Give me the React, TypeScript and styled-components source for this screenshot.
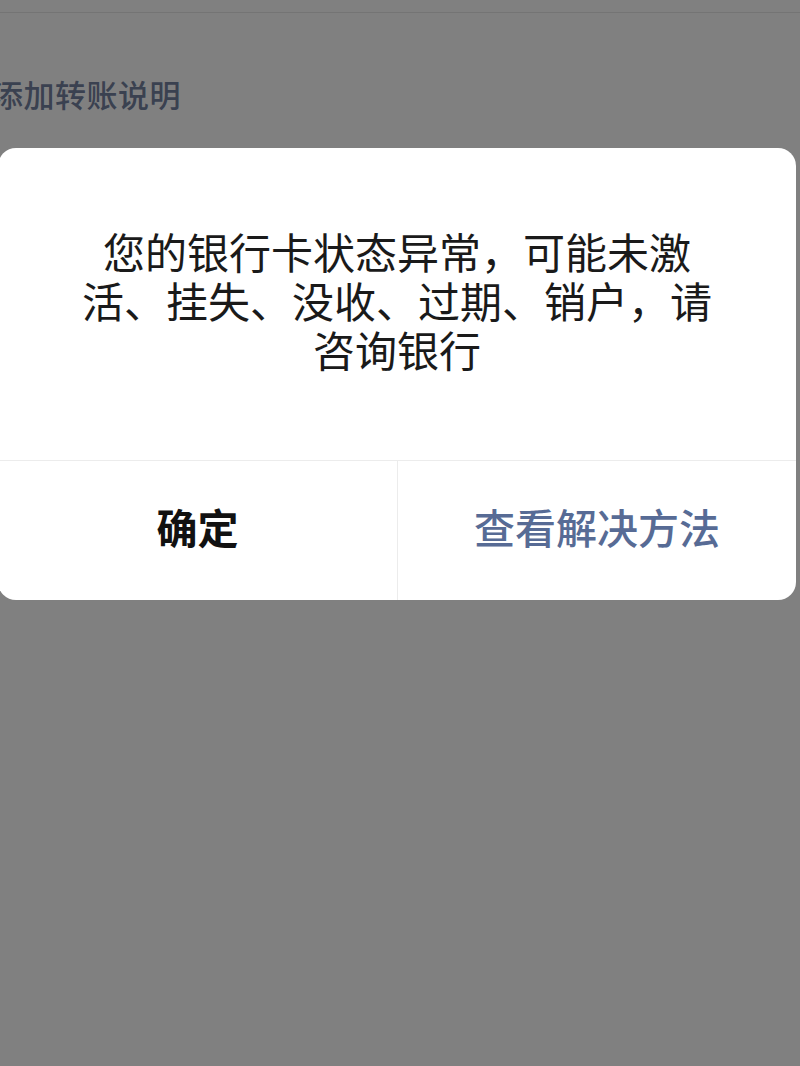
import React from "react";
import styled, { createGlobalStyle } from "styled-components";

const Global = createGlobalStyle`
  html, body {
    margin: 0;
    padding: 0;
    background: #808080;
    font-family: "Noto Sans CJK SC", "Noto Sans", sans-serif;
    overflow: hidden;
  }
  #root { min-height: 1066px; }
`;

const Page = styled.div`
  width: 800px;
  height: 1066px;
  background: #808080;
  position: relative;
  overflow: hidden;
`;

const NavBar = styled.div`
  height: 12px;
  border-bottom: 1.5px solid #747474;
`;

const Remark = styled.div`
  margin: 59px 0 0 -8px;
  font-size: 31px;
  line-height: 44px;
  font-weight: 500;
  color: #3a4150;
  letter-spacing: 0.5px;
`;

const Overlay = styled.div`
  position: absolute;
  inset: 0;
  display: flex;
  justify-content: flex-start;
  align-items: flex-start;
  padding-top: 148px;
`;

const Dialog = styled.div`
  margin-left: -2px;
  width: 798px;
  background: #ffffff;
  border-radius: 18px;
  overflow: hidden;
  display: flex;
  flex-direction: column;
`;

const Body = styled.div`
  height: 312px;
  padding-bottom: 9px;
  display: flex;
  align-items: center;
  justify-content: center;
  box-sizing: border-box;
`;

const Message = styled.p`
  margin: 0;
  max-width: 650px;
  text-align: center;
  font-size: 42px;
  line-height: 49px;
  color: #1a1a1a;
  font-weight: 400;
`;

const Actions = styled.div`
  display: grid;
  grid-template-columns: 399px 1fr;
  height: 139px;
  border-top: 1.5px solid #ececec;
`;

const Action = styled.button<{ $primary?: boolean }>`
  border: none;
  background: transparent;
  margin: 0;
  padding: 0 0 9px 0;
  display: flex;
  align-items: center;
  justify-content: center;
  font-family: inherit;
  font-size: 41px;
  font-weight: ${(p) => (p.$primary ? 500 : 700)};
  color: ${(p) => (p.$primary ? "#576b95" : "#111111")};
  & + & {
    border-left: 1.5px solid #ececec;
  }
`;

export default function App() {
  return (
    <Page>
      <Global />
      <NavBar />
      <Remark>添加转账说明</Remark>
      <Overlay>
        <Dialog>
          <Body>
            <Message>
              您的银行卡状态异常，可能未激活、挂失、没收、过期、销户，请咨询银行
            </Message>
          </Body>
          <Actions>
            <Action>确定</Action>
            <Action $primary>查看解决方法</Action>
          </Actions>
        </Dialog>
      </Overlay>
    </Page>
  );
}
